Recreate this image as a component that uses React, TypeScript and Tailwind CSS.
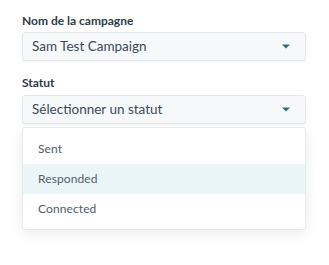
const OPTIONS = ['Sent', 'Responded', 'Connected']

const Caret = () => (
	<svg width="8" height="5" viewBox="0 0 8 5" className="fill-[#2f6f75]">
		<path d="M0 0.5h8L4 4.5z" />
	</svg>
)

const SelectBox = ({ value }: { value: string }) => (
	<div className="flex h-[29px] items-center justify-between rounded-[3px] border border-[#e3e8ee] bg-[#f6f8fa] pl-[9px] pr-[15px] shadow-[0_1px_2px_rgba(0,0,0,0.04)]">
		<span className="text-[13.5px] text-[#3b4a5a]">{value}</span>
		<Caret />
	</div>
)

export default function App() {
	return (
		<div className="min-h-[265px] w-[329px] bg-white font-['Lato',sans-serif]">
			<div className="ml-[22px] w-[284px] pt-[13px]">
				<label className="block text-[12px] font-bold leading-4 text-[#2d3b4a]">Nom de la campagne</label>
				<div className="mt-[3px]">
					<SelectBox value="Sam Test Campaign" />
				</div>

				<label className="mt-[14px] block text-[12px] font-bold leading-4 text-[#2d3b4a]">Statut</label>
				<div className="mt-[4px]">
					<SelectBox value="Sélectionner un statut" />
				</div>

				<ul className="mt-[3px] rounded-[3px] border border-[#e6eaef] bg-white pt-[6px] pb-[5px] shadow-[0_4px_14px_rgba(0,0,0,0.08)]">
					{OPTIONS.map(option => (
						<li
							key={option}
							className={`flex h-[30px] items-center pl-[15px] text-[12px] tracking-[0.1px] text-[#505e6c] ${
								option === 'Responded' ? 'bg-[#eaf5f8]' : ''
							}`}
						>
							{option}
						</li>
					))}
				</ul>
			</div>
		</div>
	)
}
